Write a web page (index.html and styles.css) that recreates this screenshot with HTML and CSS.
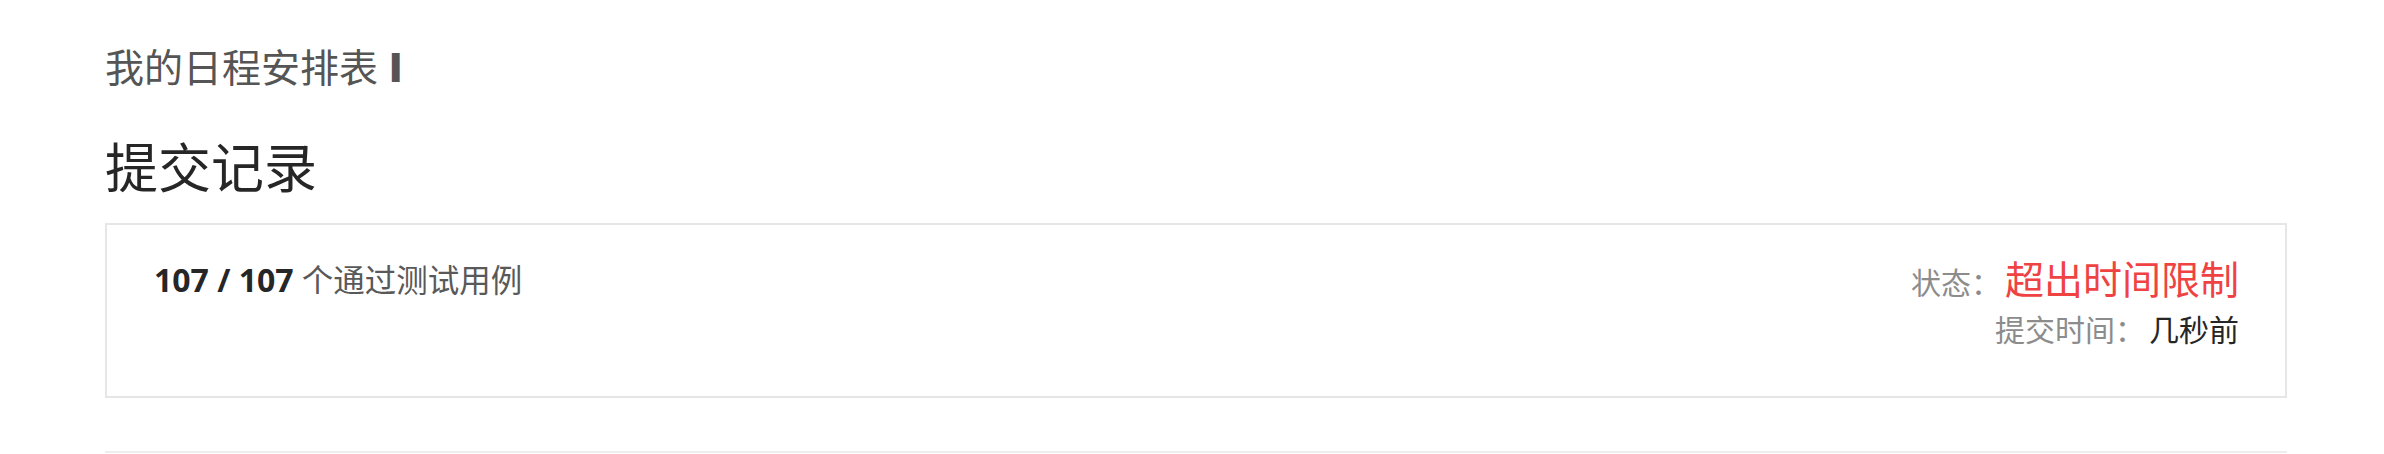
FILE: index.html
```html
<!DOCTYPE html>
<html lang="zh-CN">
<head>
<meta charset="utf-8">
<title>提交记录</title>
<link rel="stylesheet" href="styles.css">
</head>
<body>
<div class="page">
  <div class="crumb">我的日程安排表 <b class="crumb-mark">I</b></div>
  <h1 class="heading">提交记录</h1>
  <div class="card">
    <div class="result">
      <b class="count">107 / 107</b> 个通过测试用例
    </div>
    <div class="meta">
      <div class="meta-row status-row"><span class="label">状态：</span><span class="status">超出时间限制</span></div>
      <div class="meta-row time-row"><span class="label">提交时间：</span><span class="value">几秒前</span></div>
    </div>
  </div>
  <div class="divider"></div>
</div>
</body>
</html>
```
FILE: styles.css
```css
html, body {
  margin: 0;
  padding: 0;
  background: #fff;
}
body {
  font-family: "Open Sans", "Noto Sans CJK SC", sans-serif;
}
.page {
  width: 2182px;
  margin-left: 105px;
  padding-top: 36px;
}
.crumb {
  font-family: "Noto Sans CJK SC", sans-serif;
  font-size: 39px;
  line-height: 58px;
  color: #555;
}
.crumb-mark {
  margin-left: 2px;
  font-family: "Open Sans", sans-serif;
  font-weight: 800;
  font-size: 40px;
  color: #555;
}
.heading {
  margin: 32px 0 21px;
  font-family: "Noto Sans CJK SC", sans-serif;
  font-weight: 400;
  font-size: 53px;
  line-height: 74px;
  color: #262626;
}
.card {
  box-sizing: border-box;
  height: 175px;
  border: 2px solid #e6e6e6;
  padding: 27px 46px 0 47px;
  display: flex;
  justify-content: space-between;
  align-items: flex-start;
}
.result {
  font-size: 31.5px;
  line-height: 44px;
  color: #595959;
  margin-top: 6px;
}
.count {
  font-size: 32px;
  font-weight: 700;
  color: #262626;
}
.meta {
  text-align: right;
  font-family: "Noto Sans CJK SC", sans-serif;
}
.status-row {
  font-size: 39px;
  line-height: 50px;
}
.status-row .label {
  font-size: 30px;
  line-height: 1;
}
.time-row {
  margin-top: 4px;
  font-size: 30px;
  line-height: 44px;
}
.label {
  color: #8c8c8c;
}
.status {
  margin-left: 4px;
  color: #ef4343;
}
.value {
  margin-left: 4px;
  color: #262626;
}
.divider {
  margin-top: 53px;
  height: 2px;
  background: #eeeeee;
}
```
